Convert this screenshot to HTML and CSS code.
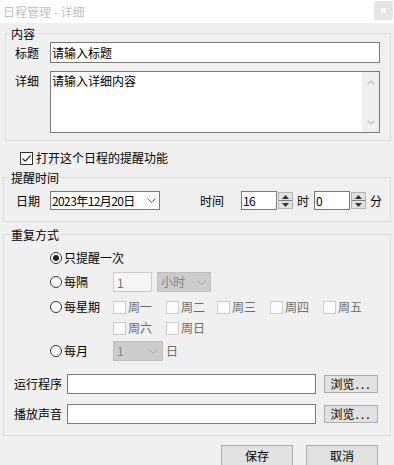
FILE: index.html
```html
<!DOCTYPE html>
<html lang="zh-CN">
<head>
<meta charset="utf-8">
<title>日程管理 - 详细</title>
<link rel="stylesheet" href="styles.css">
</head>
<body>
<div class="titlebar">
  <span class="title">日程管理 - 详细</span>
  <span class="close"><svg width="7" height="7" viewBox="0 0 7 7"><path d="M1 1 L6 6 M6 1 L1 6" stroke="#ffffff" stroke-width="1.3" fill="none"/></svg></span>
</div>

<fieldset class="group g-content">
  <legend>内容</legend>
  <div class="row r-title">
    <span class="lbl w35">标题</span>
    <div class="input w330">请输入标题</div>
  </div>
  <div class="row r-detail">
    <span class="lbl w35 top">详细</span>
    <div class="textarea">
      <div class="ta-text">请输入详细内容</div>
      <div class="vscroll">
        <svg width="8" height="5" viewBox="0 0 8 5"><path d="M0.7 4.3 L4 1 L7.3 4.3" stroke="#c2c2c2" stroke-width="1.4" fill="none"/></svg>
        <svg width="8" height="5" viewBox="0 0 8 5"><path d="M0.7 0.7 L4 4 L7.3 0.7" stroke="#c2c2c2" stroke-width="1.4" fill="none"/></svg>
      </div>
    </div>
  </div>
</fieldset>

<div class="check-row">
  <span class="cb on"><svg width="11" height="11" viewBox="0 0 11 11"><path d="M1.5 5.5 L4.2 8.2 L9.5 2.5" stroke="#333333" stroke-width="1.2" fill="none"/></svg></span>
  <span>打开这个日程的提醒功能</span>
</div>

<fieldset class="group g-time">
  <legend>提醒时间</legend>
  <div class="row r-date">
    <span class="lbl w34">日期</span>
    <div class="datepick">
      <span class="num">2023年12月20日</span>
      <svg width="9" height="5" viewBox="0 0 9 5"><path d="M0.5 0.5 L4.5 4.5 L8.5 0.5" stroke="#606060" stroke-width="1" fill="none"/></svg>
    </div>
    <span class="lbl time-lbl">时间</span>
    <div class="numbox"><span class="num">16</span></div>
    <div class="spin">
      <span class="half"><svg width="7" height="4" viewBox="0 0 7 4"><path d="M0 4 L3.5 0 L7 4 Z" fill="#333"/></svg></span>
      <span class="half bottom"><svg width="7" height="4" viewBox="0 0 7 4"><path d="M0 0 L3.5 4 L7 0 Z" fill="#333"/></svg></span>
    </div>
    <span class="unit">时</span>
    <div class="numbox"><span class="num">0</span></div>
    <div class="spin">
      <span class="half"><svg width="7" height="4" viewBox="0 0 7 4"><path d="M0 4 L3.5 0 L7 4 Z" fill="#333"/></svg></span>
      <span class="half bottom"><svg width="7" height="4" viewBox="0 0 7 4"><path d="M0 0 L3.5 4 L7 0 Z" fill="#333"/></svg></span>
    </div>
    <span class="unit">分</span>
  </div>
</fieldset>

<fieldset class="group g-repeat">
  <legend>重复方式</legend>
  <div class="row opt r1">
    <span class="radio-opt wide"><span class="radio sel"></span>只提醒一次</span>
  </div>
  <div class="row opt r2">
    <span class="radio-opt"><span class="radio"></span>每隔</span>
    <div class="dis-input"><span class="num">1</span></div>
    <div class="dis-combo w54"><span>小时</span><svg width="9" height="5" viewBox="0 0 9 5"><path d="M0.5 0.5 L4.5 4.5 L8.5 0.5" stroke="#a8a8a8" stroke-width="1" fill="none"/></svg></div>
  </div>
  <div class="row opt r3">
    <span class="radio-opt"><span class="radio"></span>每星期</span>
    <span class="day"><span class="dcb"></span>周一</span>
    <span class="day"><span class="dcb"></span>周二</span>
    <span class="day"><span class="dcb"></span>周三</span>
    <span class="day"><span class="dcb"></span>周四</span>
    <span class="day"><span class="dcb"></span>周五</span>
  </div>
  <div class="row opt r4">
    <span class="spacer"></span>
    <span class="day"><span class="dcb"></span>周六</span>
    <span class="day"><span class="dcb"></span>周日</span>
  </div>
  <div class="row opt r5">
    <span class="radio-opt"><span class="radio"></span>每月</span>
    <div class="dis-combo w50"><span class="num">1</span><svg width="9" height="5" viewBox="0 0 9 5"><path d="M0.5 0.5 L4.5 4.5 L8.5 0.5" stroke="#a8a8a8" stroke-width="1" fill="none"/></svg></div>
    <span class="dis-text day-unit">日</span>
  </div>
  <div class="row file r6">
    <span class="lbl w53">运行程序</span>
    <div class="input w249"></div>
    <button class="btn browse" type="button">浏览<span class="dots">...</span></button>
  </div>
  <div class="row file r7">
    <span class="lbl w53">播放声音</span>
    <div class="input w249"></div>
    <button class="btn browse" type="button">浏览<span class="dots">...</span></button>
  </div>
</fieldset>

<div class="actions">
  <button class="btn action" type="button">保存</button>
  <button class="btn action" type="button">取消</button>
</div>
</body>
</html>
```

FILE: styles.css
```css
* { box-sizing: border-box; }
html, body { margin: 0; padding: 0; }
body {
  width: 394px;
  height: 465px;
  overflow: hidden;
  background: #f0f0f0;
  font-family: "Noto Sans CJK SC", "Microsoft YaHei", sans-serif;
  font-size: 12px;
  line-height: 16px;
  color: #000;
  white-space: nowrap;
}

.titlebar {
  height: 23px;
  background: #ffffff;
  display: flex;
  justify-content: space-between;
  align-items: flex-start;
}
.title { color: #c2c2c2; margin-left: 3px; line-height: 23px; }
.close {
  width: 19px; height: 19px;
  margin: 1px 1px 0 0;
  background: #e6e6e6;
  display: flex; align-items: center; justify-content: center;
}

.group {
  margin: 0;
  padding: 0;
  border: 1px solid #dcdcdc;
  min-width: 0;
}
.group legend {
  padding: 0 1px;
  line-height: 15px;
  font-size: 12px;
  margin-left: 6px;
}
.g-content { margin: 3px 3px 0 5px; padding: 1px 10px 7px 9px; }
.g-content legend { margin-left: -5px; }
.g-time { margin: 4px 3px 0 3px; padding: 6px 0 11px 0; }
.g-repeat { margin: 5px 3px 0 3px; padding: 6px 0 11px 0; }

.row { display: flex; align-items: center; }
.lbl { flex: none; }
.w35 { width: 35px; }
.w34 { width: 34px; }
.w53 { width: 53px; }
.top { align-self: flex-start; padding-top: 2px; }

.input {
  height: 21px;
  background: #ffffff;
  border: 1px solid #7a7a7a;
  padding: 1px 0 0 1px;
  line-height: 17px;
}
.w330 { width: 330px; }
.w249 { width: 249px; height: 20px; }

.r-title { height: 21px; }
.r-detail { margin-top: 8px; align-items: flex-start; }
.textarea {
  width: 330px; height: 62px;
  background: #fff;
  border: 1px solid #7a7a7a;
  display: flex;
}
.ta-text { flex: 1; padding: 1px 0 0 1px; }
.vscroll {
  width: 17px;
  background: #f0f0f0;
  display: flex;
  flex-direction: column;
  justify-content: space-between;
  align-items: center;
  padding: 8px 0 7px;
}

.check-row {
  margin: 9px 0 0 20px;
  height: 16px;
  display: flex;
  align-items: center;
}
.cb {
  width: 13px; height: 13px;
  border: 1px solid #333;
  background: #fff;
  margin-right: 3px;
  display: flex; align-items: center; justify-content: center;
}

.num { letter-spacing: -0.6px; }
.r-date { height: 19px; padding-left: 12px; }
.datepick {
  width: 110px; height: 19px;
  background: #fff;
  border: 1px solid #7a7a7a;
  display: flex; align-items: center; justify-content: space-between;
  padding: 0 3px 0 1px;
}
.time-lbl { margin-left: 40px; width: 41px; }
.numbox {
  width: 36px; height: 19px;
  background: #fff;
  border: 1px solid #7a7a7a;
  padding-left: 1px;
  line-height: 17px;
}
.spin {
  width: 15px; height: 17px;
  margin-left: 1px;
  border: 1px solid #b4b4b4;
  background: #e1e1e1;
  display: flex; flex-direction: column;
}
.spin .half { flex: 1; display: flex; align-items: center; justify-content: center; }
.spin .half.bottom { border-top: 1px solid #7f7f7f; }
.unit { margin-left: 4px; width: 17px; }

.opt { padding-left: 46px; height: 20px; }
.radio-opt { width: 63px; display: flex; align-items: center; flex: none; }
.radio-opt.wide { width: auto; }
.spacer { width: 63px; flex: none; }
.radio {
  width: 12px; height: 12px;
  border: 1px solid #333;
  border-radius: 50%;
  background: #fff;
  margin-right: 2px;
  display: flex; align-items: center; justify-content: center;
}
.radio.sel::after {
  content: "";
  width: 6px; height: 6px;
  border-radius: 50%;
  background: #222;
}
.r2 { margin-top: 4px; }
.r3 { margin-top: 5px; }
.r4 { margin-top: 1px; }
.r5 { margin-top: 3px; }
.dis-input {
  width: 39px; height: 20px;
  border: 1px solid #cccccc;
  background: #f5f5f5;
  color: #6d6d6d;
  padding: 1px 0 0 3px;
  line-height: 17px;
}
.dis-combo {
  height: 20px;
  border: 1px solid #bfbfbf;
  background: #cccccc;
  color: #838383;
  display: flex; align-items: center; justify-content: space-between;
  padding: 0 4px 0 3px;
}
.w54 { width: 54px; margin-left: 5px; }
.w50 { width: 50px; padding-right: 4px; }
.day { width: 53px; flex: none; display: flex; align-items: center; color: #6d6d6d; }
.r3 .day:nth-of-type(3) { width: 51px; }
.dcb {
  width: 13px; height: 13px;
  border: 1px solid #cccccc;
  background: #fcfcfc;
  margin-right: 2px;
}
.dis-text { color: #6d6d6d; }
.day-unit { margin-left: 3px; }

.file { padding-left: 10px; height: 20px; }
.r6 { margin-top: 13px; }
.r7 { margin-top: 10px; }

.btn {
  font-family: inherit;
  font-size: 12px;
  color: #000;
  background: #e1e1e1;
  border: 1px solid #adadad;
  padding: 0;
  margin: 0;
  line-height: 16px;
}
.browse { width: 54px; height: 18px; margin-left: 8px; }
.dots { letter-spacing: 2px; margin-left: 1px; }

.actions {
  margin-top: 9px;
  display: flex;
  justify-content: flex-end;
  gap: 13px;
  padding-right: 16px;
}
.action { width: 72px; height: 21px; }
```
